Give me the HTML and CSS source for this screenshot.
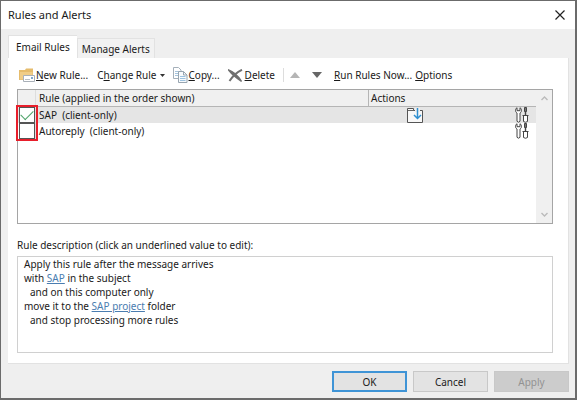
FILE: index.html
```html
<!DOCTYPE html>
<html lang="en">
  <head>
    <meta charset="UTF-8" />
    <meta name="viewport" content="width=device-width, initial-scale=1.0" />
    <title>Rules and Alerts</title>
    <link rel="stylesheet" href="styles.css">
  </head>
  <body>
    <div class="dialog">
      <header class="title-bar">
        <h1>Rules and Alerts</h1>
        <button type="button" class="close-button" aria-label="Close">
          <svg width="10" height="10" viewBox="0 0 10 10">
            <path d="M0.5 0.5L9.5 9.5M9.5 0.5L0.5 9.5" stroke="#222" stroke-width="1.2" />
          </svg>
        </button>
      </header>

      <main class="dialog-body">
        <div class="tabs" role="tablist">
          <button type="button" class="tab active" role="tab" aria-selected="true">Email Rules</button>
          <button type="button" class="tab" role="tab" aria-selected="false">Manage Alerts</button>
        </div>

        <section class="panel">
          <div class="toolbar">
            <button type="button" class="tool new-rule">
              <svg width="16" height="15" viewBox="0 0 16 15">
                <path d="M0 2h6l1-1.5h7V12H0z" fill="#e6bc6c" />
                <path d="M1 4h12.5v7.500H1z" fill="#f0cd88" />
                <path d="M4.500 7.500h11v6h-11z" fill="#fff" stroke="#a9b0b8" />
                <path d="M6 11.500h5" stroke="#b9c0c8" />
                <path d="M12 9h2v2h-2z" fill="#7fa8d0" />
              </svg>
              <span><u>N</u>ew Rule...</span>
            </button>
            <button type="button" class="tool change-rule">
              <span>C<u>h</u>ange Rule</span>
              <svg class="caret" width="5" height="3" viewBox="0 0 5 3"><path d="M0 0h5L2.500 3z" fill="#333" /></svg>
            </button>
            <button type="button" class="tool copy">
              <svg width="15" height="16" viewBox="0 0 15 16">
                <path d="M0.500 0.500h5l2.500 2.500v8.500H0.500z" fill="#fff" stroke="#a5b0ba" />
                <path d="M2 4.500h4M2 6.500h4M2 8.500h4" stroke="#a5c4dd" />
                <path d="M5.500 4.500h5l3.500 3.500v7.500H5.500z" fill="#f8fbfd" stroke="#98a5b0" />
                <path d="M10.500 4.500V8H14" fill="none" stroke="#98a5b0" />
                <path d="M7 9.500h5.500M7 11.500h5.500M7 13.500h5.500" stroke="#9cc2e0" />
              </svg>
              <span><u>C</u>opy...</span>
            </button>
            <button type="button" class="tool delete">
              <svg width="15" height="13" viewBox="0 0 15 13">
                <path d="M0.500 1C5 2.500 10 7 13.500 12.300 9 9.500 4 5.500 0.500 1z" fill="#666" stroke="#707070" stroke-width="1.400" />
                <path d="M14 0.800C9 3 4.500 7.500 1.500 12" fill="none" stroke="#707070" stroke-width="2" />
              </svg>
              <span><u>D</u>elete</span>
            </button>
            <span class="separator"></span>
            <button type="button" class="tool move" aria-label="Move up" disabled>
              <svg width="10" height="6" viewBox="0 0 10 6"><path d="M0 6L5 0l5 6z" fill="#b5b5b5" /></svg>
            </button>
            <button type="button" class="tool move" aria-label="Move down">
              <svg width="10" height="6" viewBox="0 0 10 6"><path d="M0 0h10L5 6z" fill="#666" /></svg>
            </button>
            <button type="button" class="tool run"><span><u>R</u>un Rules Now...</span></button>
            <button type="button" class="tool"><span><u>O</u>ptions</span></button>
          </div>

          <div class="rule-list">
            <div class="table-wrap">
              <table class="rules">
                <thead>
                  <tr>
                    <th class="check-cell"></th>
                    <th>Rule (applied in the order shown)</th>
                    <th class="actions" colspan="2">Actions</th>
                  </tr>
                </thead>
                <tbody>
                  <tr class="selected">
                    <td class="check-cell"><input type="checkbox" id="ruleSap" checked /></td>
                    <td><label for="ruleSap">SAP&nbsp; (client-only)</label></td>
                    <td class="move-cell">
                      <svg width="16" height="15" viewBox="0 0 16 15">
                        <path d="M0.500 0.500h6v2h9v12H0.500z" fill="#f8f8f8" stroke="#555" />
                        <path d="M1 2.500h6" stroke="#666" />
                        <path d="M8 0h5v4H8z" fill="#f0f0f0" />
                        <path d="M10.500 0v10.500M7 7l3.500 3.500L14 7" fill="none" stroke="#2f8fd0" stroke-width="1.500" />
                      </svg>
                    </td>
                    <td class="tools-cell">
                      <svg width="14" height="16" viewBox="0 0 14 16">
                        <path d="M2 0.700v3h3v-3C7 2 7 4.800 5 6v8.300q-1.500 1.800-3 0V6C0 4.800 0 2 2 0.700z" fill="#fff" stroke="#444" />
                        <path d="M9.500 0.500h2v4h-2z" fill="#777" stroke="#444" />
                        <path d="M10.500 4.500V8.500" stroke="#444" stroke-width="1.400" />
                        <path d="M7.500 8.500h6M8.500 8.500v6q2 1.500 4 0v-6" fill="#fff" stroke="#444" />
                      </svg>
                    </td>
                  </tr>
                  <tr>
                    <td class="check-cell"><input type="checkbox" id="ruleAutoreply" /></td>
                    <td><label for="ruleAutoreply">Autoreply&nbsp; (client-only)</label></td>
                    <td class="move-cell"></td>
                    <td class="tools-cell">
                      <svg width="14" height="16" viewBox="0 0 14 16">
                        <path d="M2 0.700v3h3v-3C7 2 7 4.800 5 6v8.300q-1.500 1.800-3 0V6C0 4.800 0 2 2 0.700z" fill="#fff" stroke="#444" />
                        <path d="M9.500 0.500h2v4h-2z" fill="#777" stroke="#444" />
                        <path d="M10.500 4.500V8.500" stroke="#444" stroke-width="1.400" />
                        <path d="M7.500 8.500h6M8.500 8.500v6q2 1.500 4 0v-6" fill="#fff" stroke="#444" />
                      </svg>
                    </td>
                  </tr>
                </tbody>
              </table>
            </div>
            <div class="scrollbar">
              <svg width="7" height="5" viewBox="0 0 7 5"><path d="M0.500 4L3.500 1l3 3" fill="none" stroke="#bbb" stroke-width="1.400" /></svg>
              <svg width="7" height="5" viewBox="0 0 7 5"><path d="M0.500 1l3 3 3-3" fill="none" stroke="#bbb" stroke-width="1.400" /></svg>
            </div>
            <div class="highlight"></div>
          </div>

          <h2>Rule description (click an underlined value to edit):</h2>
          <div class="description">
            <p>Apply this rule after the message arrives</p>
            <p>with <a href="#">SAP</a> in the subject</p>
            <p class="indent">and on this computer only</p>
            <p>move it to the <a href="#">SAP project</a> folder</p>
            <p class="indent">and stop processing more rules</p>
          </div>
        </section>

        <footer class="buttons">
          <button type="button" class="btn default">OK</button>
          <button type="button" class="btn">Cancel</button>
          <button type="button" class="btn" disabled>Apply</button>
        </footer>
      </main>
    </div>
  </body>
</html>
```
FILE: styles.css
```css
* {
  margin: 0;
  padding: 0;
  box-sizing: border-box;
}

body {
  font-family: "Noto Sans", "Open Sans", sans-serif;
  font-size: 10px;
  line-height: 16px;
  color: #1a1a1a;
}

button {
  font: inherit;
  color: inherit;
  background: none;
  border: none;
  white-space: nowrap;
}

svg {
  display: block;
  flex: none;
}

u {
  text-underline-offset: 1px;
}

.dialog {
  min-height: 100vh;
  display: flex;
  flex-direction: column;
  border: 1px solid #6b6b6b;
  border-right-width: 2px;
  border-bottom-width: 2px;
  background: #efefef;
}

.title-bar {
  display: flex;
  align-items: center;
  justify-content: space-between;
  height: 28px;
  padding: 0 10px 0 7px;
  background: #fff;
}

.title-bar h1 {
  font-size: 11px;
  font-weight: normal;
}

.dialog-body {
  flex: 1;
  display: flex;
  flex-direction: column;
  padding: 6px 6px 6px 7px;
}

.tabs {
  display: flex;
  align-items: flex-end;
}

.tab {
  height: 20px;
  padding: 0 4px;
  border: 1px solid #e2e2e2;
  border-bottom: none;
  background: #f2f2f2;
}

.tab.active {
  height: 23px;
  padding: 0 7px;
  border-right: none;
  background: #fff;
}

.panel {
  flex: 1;
  display: flex;
  flex-direction: column;
  padding: 7px 15px 10px 9px;
  background: #fff;
  border-right: 1px solid #e2e2e2;
  border-bottom: 1px solid #e2e2e2;
}

.toolbar {
  display: flex;
  align-items: center;
  height: 20px;
  margin-bottom: 4px;
  padding-left: 2px;
}

.tool {
  display: flex;
  align-items: center;
  gap: 1px;
  margin-right: 8px;
}

.tool.new-rule {
  margin-right: 9px;
}

.tool.change-rule {
  gap: 3px;
}

.tool.delete {
  gap: 2px;
}

.separator {
  width: 1px;
  height: 14px;
  margin-right: 6px;
  background: #ddd;
}

.tool.move {
  margin-right: 12px;
}

.tool.run {
  margin-right: 3px;
}

.rule-list {
  position: relative;
  display: flex;
  min-height: 135px;
  border: 1px solid #a5a5a5;
}

.table-wrap {
  flex: 1;
}

.rules {
  width: 100%;
  border-collapse: separate;
  border-spacing: 0;
  table-layout: fixed;
}

.rules th {
  height: 17px;
  padding-left: 3px;
  background: #f0f0f0;
  border-bottom: 1px solid #b5b5b5;
  font-weight: normal;
  line-height: 16px;
  text-align: left;
}

.rules td {
  height: 16px;
  padding-left: 3px;
  line-height: 16px;
}

.rules th.check-cell,
.rules td.check-cell {
  width: 18px;
  padding-left: 1px;
  border-right: 1px solid #ddd;
}

.rules th.actions {
  width: 168px;
  padding-left: 2px;
  border-left: 1px solid #b5b5b5;
}

.rules .move-cell {
  padding-left: 39px;
}

.tools-cell svg {
  margin-left: auto;
  margin-right: 7px;
}

.selected td {
  background: #e5e5e5;
}

.check-cell input {
  display: block;
  appearance: none;
  width: 16px;
  height: 16px;
  border: 1px solid #555;
  background: #fff;
}

.check-cell input:checked::before {
  content: "";
  display: block;
  width: 11px;
  height: 6px;
  margin: 2px 1px;
  border-left: 1px solid #4fa36a;
  border-bottom: 1px solid #4fa36a;
  transform: rotate(-45deg);
}

.scrollbar {
  width: 16px;
  display: flex;
  flex-direction: column;
  align-items: center;
  justify-content: space-between;
  padding: 6px 0;
  background: #f0f0f0;
}

.highlight {
  position: absolute;
  top: 15px;
  left: -2px;
  width: 22px;
  height: 36px;
  border: 2px solid #e81e2b;
  pointer-events: none;
}

.panel h2 {
  margin: 13px 0 3px;
  font-size: 10px;
  font-weight: normal;
}

.description {
  flex: 1;
  padding: 0 6px;
  border: 1px solid #d0d0d0;
  line-height: 14px;
}

.description .indent {
  padding-left: 6px;
}

.description a {
  color: #4a7db0;
}

.buttons {
  display: flex;
  justify-content: flex-end;
  gap: 6px;
  padding-top: 7px;
}

.btn {
  width: 75px;
  height: 21px;
  border: 1px solid #c8c8c8;
  background: #e3e3e3;
}

.btn.default {
  border: 2px solid #3f94d6;
  line-height: 14px;
}

.btn:disabled {
  background: #ccc;
  color: #929292;
}
```
